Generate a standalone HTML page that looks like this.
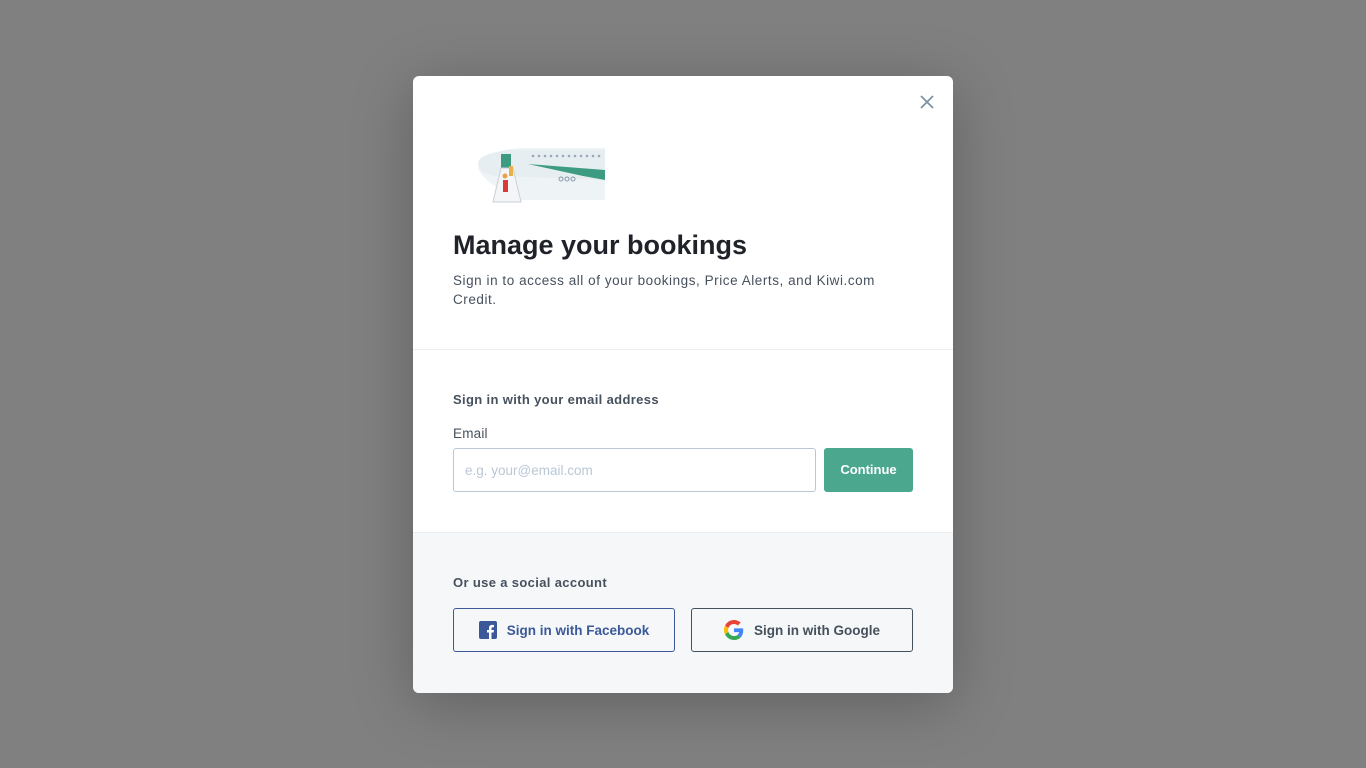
<!DOCTYPE html>
<html><head><meta charset="utf-8"><style>
*{box-sizing:border-box;margin:0;padding:0}
body{width:1366px;height:768px;background:#808080;font-family:"Liberation Sans",sans-serif;position:relative;overflow:hidden}
.m{position:absolute;left:413px;top:76px;width:540px;height:617px;background:#fff;border-radius:6px;overflow:hidden;box-shadow:0 10px 60px rgba(0,0,0,.25)}
.close{position:absolute;left:507px;top:19px}
h1{position:absolute;left:40px;top:154px;font-size:27px;font-weight:bold;color:#1f2329}
.sub{position:absolute;left:40px;top:195px;width:460px;font-size:13.5px;line-height:19px;color:#46515e;letter-spacing:.55px}
.hr1{position:absolute;left:0;top:273px;width:540px;border-top:1px solid #e8edf1}
.lbl{position:absolute;left:40px;font-size:13px;font-weight:bold;color:#46515e;letter-spacing:.35px}
.el{position:absolute;left:40px;top:350px;font-size:13.5px;color:#46515e;letter-spacing:.2px}
.inp{position:absolute;left:40px;top:372px;width:363px;height:44px;border:1px solid #bac7d5;border-radius:3px;font-size:13.5px;color:#bac7d5;padding:14px 11px}
.btn{position:absolute;left:411px;top:372px;width:89px;height:44px;background:#4ba88f;color:#fff;border-radius:3px;font-size:13px;font-weight:bold;text-align:center;line-height:44px}
.foot{position:absolute;left:0;top:456px;width:540px;height:161px;background:#f5f7f9;border-top:1px solid #e8edf1}
.sb{position:absolute;top:75px;width:222px;height:44px;border:1px solid;border-radius:3px;font-size:13.5px;font-weight:bold;display:flex;align-items:center;justify-content:center;gap:10px}
</style></head><body>
<div class="m">
<svg class="close" width="14" height="14" viewBox="0 0 14 14"><path d="M1 1L13 13M13 1L1 13" stroke="#7f91a8" stroke-width="1.8"/></svg>
<svg style="position:absolute;left:60px;top:64px" width="135" height="66" viewBox="0 0 135 66">
<ellipse cx="22" cy="20" rx="14" ry="6" fill="#eef1f4"/>
<path d="M18 16 Q30 8 50 8 L132 8 L132 60 L45 60 Q10 42 5 28 Q5 18 18 16Z" fill="#eef3f6"/>
<path d="M5 22 Q10 12 40 10 L132 10 L132 40 L20 36 Q5 32 5 22Z" fill="#e6eef2"/>
<path d="M55 24 L132 30 L132 40 L110 36Z" fill="#3d9b81"/>
<g fill="#9aa8b5"><circle cx="60" cy="16" r="1.3"/><circle cx="66" cy="16" r="1.3"/><circle cx="72" cy="16" r="1.3"/><circle cx="78" cy="16" r="1.3"/><circle cx="84" cy="16" r="1.3"/><circle cx="90" cy="16" r="1.3"/><circle cx="96" cy="16" r="1.3"/><circle cx="102" cy="16" r="1.3"/><circle cx="108" cy="16" r="1.3"/><circle cx="114" cy="16" r="1.3"/><circle cx="120" cy="16" r="1.3"/><circle cx="126" cy="16" r="1.3"/></g>
<g fill="none" stroke="#8a98a8" stroke-width="1"><circle cx="88" cy="39" r="2"/><circle cx="94" cy="39" r="2"/><circle cx="100" cy="39" r="2"/></g>
<rect x="28" y="14" width="10" height="20" fill="#3d9b81"/>
<path d="M20 62 L28 28 L40 28 L48 62Z" fill="#f3f5f7" stroke="#c9d0d7"/>
<rect x="30" y="40" width="5" height="12" fill="#d83a3a"/><circle cx="32" cy="36" r="2.5" fill="#e6a34a"/>
<rect x="36" y="26" width="4" height="10" fill="#e6b24a"/>
</svg>
<h1>Manage your bookings</h1>
<div class="sub">Sign in to access all of your bookings, Price Alerts, and Kiwi.com Credit.</div>
<div class="hr1"></div>
<div class="lbl" style="top:316px">Sign in with your email address</div>
<div class="el">Email</div>
<div class="inp">e.g. your@email.com</div>
<div class="btn">Continue</div>
<div class="foot">
<div class="lbl" style="top:42px">Or use a social account</div>
<div class="sb" style="left:40px;border-color:#3b5998;color:#3b5998"><svg width="18" height="18" viewBox="0 0 18 18"><rect width="18" height="18" rx="2" fill="#3b5998"/><path d="M12.5 18V11.5H14.6L15 9H12.5V7.4C12.5 6.7 12.8 6.2 13.8 6.2H15V4C14.7 4 13.9 3.9 13 3.9 11.1 3.9 10 5 10 7V9H8V11.5H10V18Z" fill="#fff"/></svg>Sign in with Facebook</div>
<div class="sb" style="left:278px;border-color:#46515e;color:#46515e"><svg width="20" height="20" viewBox="0 0 48 48"><path fill="#EA4335" d="M24 9.5c3.5 0 6.6 1.2 9.1 3.6l6.8-6.8C35.8 2.4 30.3 0 24 0 14.6 0 6.6 5.4 2.6 13.3l7.9 6.1C12.4 13.6 17.7 9.5 24 9.5z"/><path fill="#4285F4" d="M46.1 24.5c0-1.6-.1-3.1-.4-4.5H24v9h12.4c-.5 2.9-2.2 5.300-4.6 7l7.7 6c4.5-4.2 6.600-10.3 6.6-17.5z"/><path fill="#FBBC05" d="M10.5 28.6c-.5-1.4-.8-3-.8-4.6s.3-3.2.8-4.6l-7.9-6.1C.9 16.5 0 20.1 0 24s.9 7.5 2.6 10.7l7.9-6.1z"/><path fill="#34A853" d="M24 48c6.5 0 11.9-2.1 15.9-5.8l-7.7-6c-2.2 1.5-5 2.3-8.2 2.3-6.3 0-11.6-4.1-13.5-9.9l-7.9 6.1C6.6 42.6 14.6 48 24 48z"/></svg>Sign in with Google</div>
</div>
</div>
</body></html>
